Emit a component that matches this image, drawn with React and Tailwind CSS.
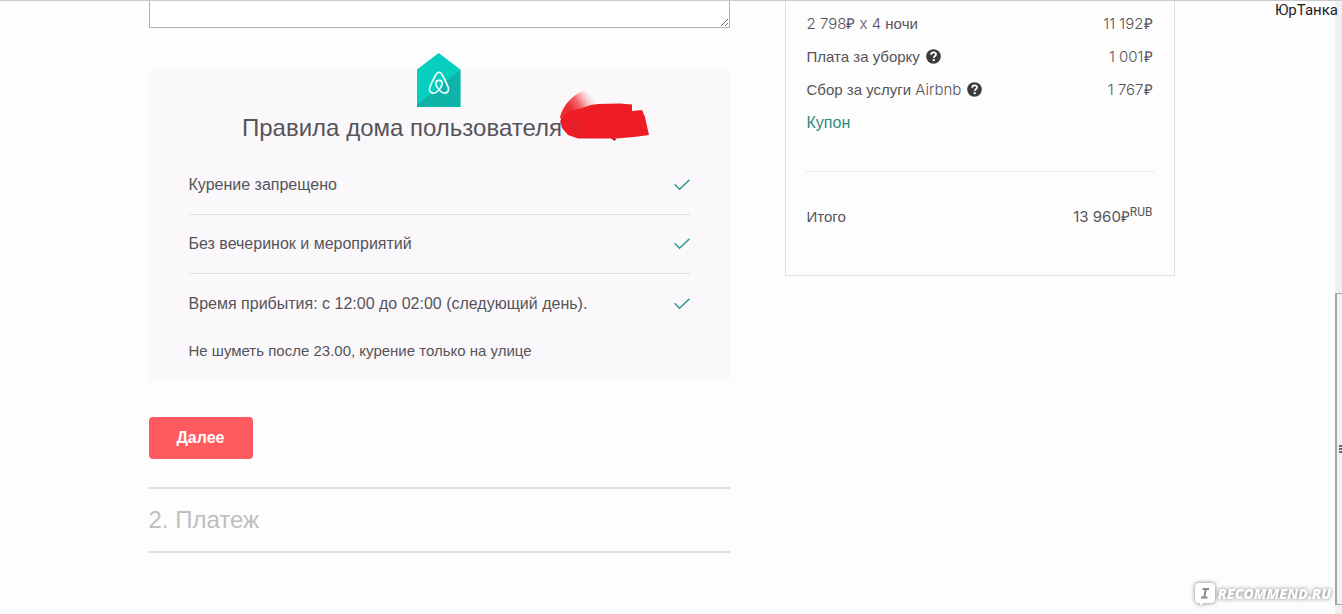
import React from "react";

const rules = [
  "Курение запрещено",
  "Без вечеринок и мероприятий",
  "Время прибытия: с 12:00 до 02:00 (следующий день).",
];

function Check() {
  return (
    <svg className="h-3 w-4 shrink-0" viewBox="0 0 16 12" fill="none" aria-hidden="true">
      <path d="M0.7 5.2 L5.5 10.3 L15.4 0.9" stroke="#349a94" strokeWidth="1.5" />
    </svg>
  );
}

function HouseLogo() {
  return (
    <svg className="h-[54px] w-[44px]" viewBox="0 0 44 54" aria-hidden="true">
      <path d="M0 16.5 L21.700 0 L43.4 16.5 V54 H0 Z" fill="#06cfc0" />
      <path d="M43.4 17 V54 H0 V51.5 Z" fill="#0eb3a8" />
      <g fill="none" stroke="#e8fffb" strokeWidth="1.7" strokeLinejoin="round" strokeLinecap="round">
        <path d="M22 36.8 C20 39.2 18 40.4 16 40.2 C13 39.8 11.700 37 12.8 34.2 C14.2 30.6 17.2 24.600 19.2 21.2 C20.600 18.8 23.4 18.8 24.8 21.2 C26.8 24.6 29.8 30.6 31.2 34.2 C32.3 37 31 39.8 28 40.2 C26 40.4 24 39.2 22 36.8 C20.200 34.600 18.8 32.4 18.800 30.600 C18.8 28.600 20.200 27.4 22 27.4 C23.8 27.4 25.2 28.6 25.2 30.6 C25.2 32.4 23.8 34.6 22 36.8 Z" />
      </g>
    </svg>
  );
}

function Smear() {
  return (
    <svg className="h-[52px] w-[92px]" viewBox="0 0 92 52" aria-hidden="true">
      <defs>
        <linearGradient id="smear" gradientUnits="userSpaceOnUse" x1="12" y1="20" x2="32" y2="7">
          <stop offset="0" stopColor="#ec2f35" />
          <stop offset="0.4" stopColor="#ef5257" stopOpacity="0.85" />
          <stop offset="1" stopColor="#f9b5b8" stopOpacity="0.1" />
        </linearGradient>
      </defs>
      <path d="M23 1 C13 5 3 15 0 27 L3 35 L8 43 L20 24 L38 15 C35 9 30 3 23 1 Z" fill="url(#smear)" />
      <path d="M1 30 C4 24 9 21 15 20 L22 18 L31 15 L38 14 L60 13.500 L72 14.500 V21 L82 20 L85 27 L89 45 L74 47 L56 48.500 L54 50.500 L51 48.500 H18 L8 45 L2 38 L0 31 Z" fill="#ee1d25" />
      <path d="M12 43 V29 L17 43 V29" fill="none" stroke="#c92a3c" strokeWidth="1" opacity="0.7" />
      <path d="M53 49 H56 L54.500 51 Z" fill="#7c1418" />
    </svg>
  );
}

function Help({ label }) {
  return (
    <button type="button" aria-label={label} className="ml-[6px] h-[15px] w-[15px]">
      <svg viewBox="0 0 15 15" className="block h-[15px] w-[15px]">
        <circle cx="7.5" cy="7.5" r="7.3" fill="#3b3b3d" />
        <path d="M5.1 5.8 C5.1 4.1 6.1 3.4 7.6 3.400 C9.1 3.4 10 4.300 10 5.4 C10 7 7.9 7 7.700 8.9" fill="none" stroke="#fff" strokeWidth="1.7" />
        <rect x="6.7" y="10.1" width="2" height="2" fill="#fff" />
      </svg>
    </button>
  );
}

const light = "font-['Inter','Liberation_Sans',sans-serif] font-light";

function Price({ children }) {
  return (
    <span className="whitespace-nowrap">
      <span className={light}>{children}</span>₽
    </span>
  );
}

function Grip() {
  return (
    <span className="flex flex-col gap-px pl-[2px]">
      <span className="h-[2px] w-full bg-[#6b6b70]" />
      <span className="h-[2px] w-full bg-[#6b6b70]" />
      <span className="h-[2px] w-full bg-[#6b6b70]" />
    </span>
  );
}

export default function App() {
  return (
    <div className="relative flex min-h-screen border-t border-[#cbcacd] bg-[#fefdfe] font-['Liberation_Sans',Arial,sans-serif] text-base text-[#565459]">
      <div className="min-w-0 flex-1 pl-[10px]">
        <div className="mx-auto grid max-w-[1026px] grid-cols-[581fr_390fr] items-start gap-x-[55px]">
          <main>
            <textarea
              aria-label="Сообщение хозяину"
              className="block h-[27px] w-full border border-t-0 border-[#b3b0b6] bg-white"
            />

            <section className="mt-[42px] flex flex-col bg-[#faf8fb] px-10 pb-[18px]">
              <div className="-mt-[17px] flex flex-col items-center">
                <HouseLogo />
                <h2 className="mt-[5px] flex h-8 items-center whitespace-nowrap text-2xl">
                  <span className="relative">
                    Правила дома пользователя
                    <span className="absolute -top-[22px] left-full -ml-[2px]">
                      <Smear />
                    </span>
                  </span>
                  <span className="w-[74px]" />
                </h2>
              </div>
              <ul className="mt-3">
                {rules.map((rule, i) => (
                  <li
                    key={rule}
                    className={
                      "flex h-[59px] items-center justify-between " +
                      (i < rules.length - 1 ? "border-b border-[#dfdde2]" : "")
                    }
                  >
                    <span>{rule}</span>
                    <Check />
                  </li>
                ))}
              </ul>
              <p className="mt-[6px] text-[15px] leading-6">Не шуметь после 23.00, курение только на улице</p>
            </section>

            <button
              type="button"
              className="mt-9 block h-[42px] w-[104px] rounded bg-[#ff5a5f] text-base font-bold text-white"
            >
              Далее
            </button>

            <section className="mt-7 flex h-[66px] items-center border-y-2 border-[#dfdde1]">
              <h2 className="text-2xl text-[#bfbebf]">2. Платеж</h2>
            </section>
          </main>

          <aside className="border border-t-0 border-[#e0dfe4] px-[19px] pt-[6px] text-[15px] leading-[33px]">
            <dl className="border-b border-[#ececef] pb-8">
              <div className="flex justify-between px-[2px]">
                <dt>
                  <span className={light}>2 798</span>₽ <span className={light}>x 4</span> ночи
                </dt>
                <dd><Price>11 192</Price></dd>
              </div>
              <div className="flex justify-between px-[2px]">
                <dt className="flex items-center">
                  Плата за уборку <Help label="О плате за уборку" />
                </dt>
                <dd><Price>1 001</Price></dd>
              </div>
              <div className="flex justify-between px-[2px]">
                <dt className="flex items-center">
                  <span>Сбор за услуги <span className={light}>Airbnb</span></span>
                  <Help label="О сборе за услуги" />
                </dt>
                <dd><Price>1 767</Price></dd>
              </div>
              <div className="px-[2px]">
                <a href="#coupon" className="text-base leading-[33px] text-[#2f8a80]">Купон</a>
              </div>
            </dl>
            <div className="flex h-[103px] items-start justify-between px-[2px] pt-7">
              <span>Итого</span>
              <span className="flex whitespace-nowrap">
                <span className="font-['Inter','Liberation_Sans',sans-serif]">13 960</span>₽
                <span className="-mt-1 font-['Roboto',sans-serif] text-xs leading-[33px]">RUB</span>
              </span>
            </div>
          </aside>
        </div>
      </div>

      <div className="flex w-[29px] shrink-0 flex-col items-end" aria-hidden="true">
        <div className="h-[292px] w-[7px] bg-[#f0eff2]" />
        <div className="flex w-[7px] flex-1 flex-col justify-center border-l-2 border-t border-[#a5a4a9] bg-[#f1f0f3]">
          <Grip />
        </div>
        <div className="h-[10px] w-[7px] border-t border-[#a5a4a9] bg-[#f0eff2]" />
      </div>

      <span className="absolute right-1 top-0 font-['Roboto',sans-serif] text-[15px] leading-[18px] text-[#1c1c1e]">
        ЮрТанка
      </span>

      <div className="absolute bottom-2 right-[11px] flex items-center gap-[3px] font-['Open_Sans',sans-serif] text-[14px] font-extrabold italic leading-5 text-white drop-shadow-[0_0_2px_#777]">
        <svg className="h-6 w-5" viewBox="0 0 20 24" aria-hidden="true">
          <path d="M4 1 H16 Q20 1 20 5 V17 Q20 21 16 21 H9 L5 24 V21 H4 Q0 21 0 17 V5 Q0 1 4 1 Z" fill="#fff" />
          <path d="M7.500 7 H14 M6 15.500 H12.500 M10.800 7 L9.200 15.500" stroke="#8c8c8e" strokeWidth="2" fill="none" />
        </svg>
        <span>RECOMMEND.RU</span>
      </div>
    </div>
  );
}
